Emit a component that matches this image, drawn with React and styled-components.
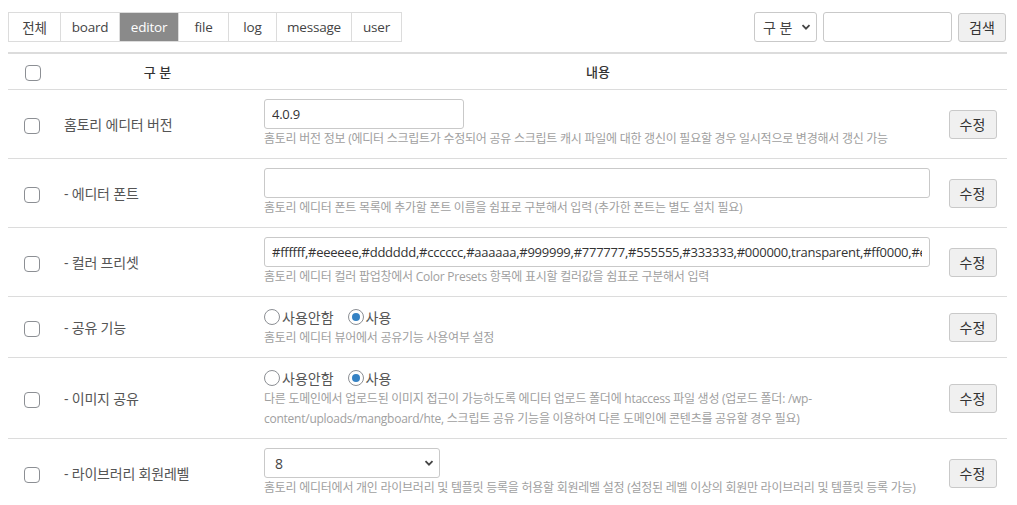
import React from "react";
import styled, { createGlobalStyle } from "styled-components";

const GlobalStyle = createGlobalStyle`
  body {
    margin: 0;
    background: #fff;
    font-family: "Open Sans", "Noto Sans CJK KR", sans-serif;
    color: #555;
  }
`;

const tabs = [
  { name: "전체", width: 51 },
  { name: "board", width: 59 },
  { name: "editor", width: 59 },
  { name: "file", width: 50 },
  { name: "log", width: 48 },
  { name: "message", width: 75 },
  { name: "user", width: 50 },
];

const rows = [
  {
    label: "홈토리 에디터 버전",
    type: "text",
    value: "4.0.9",
    width: "200px",
    desc: "홈토리 버전 정보 (에디터 스크립트가 수정되어 공유 스크립트 캐시 파일에 대한 갱신이 필요할 경우 일시적으로 변경해서 갱신 가능",
  },
  {
    label: "- 에디터 폰트",
    type: "text",
    value: "",
    width: "100%",
    desc: "홈토리 에디터 폰트 목록에 추가할 폰트 이름을 쉼표로 구분해서 입력 (추가한 폰트는 별도 설치 필요)",
  },
  {
    label: "- 컬러 프리셋",
    type: "text",
    value:
      "#ffffff,#eeeeee,#dddddd,#cccccc,#aaaaaa,#999999,#777777,#555555,#333333,#000000,transparent,#ff0000,#e91e63,#9c27b0",
    width: "100%",
    desc: "홈토리 에디터 컬러 팝업창에서 Color Presets 항목에 표시할 컬러값을 쉼표로 구분해서 입력",
  },
  {
    label: "- 공유 기능",
    type: "radio",
    desc: "홈토리 에디터 뷰어에서 공유기능 사용여부 설정",
  },
  {
    label: "- 이미지 공유",
    type: "radio",
    desc: "다른 도메인에서 업로드된 이미지 접근이 가능하도록 에디터 업로드 폴더에 htaccess 파일 생성 (업로드 폴더: /wp-content/uploads/mangboard/hte, 스크립트 공유 기능을 이용하여 다른 도메인에 콘텐츠를 공유할 경우 필요)",
  },
  {
    label: "- 라이브러리 회원레벨",
    type: "select",
    value: "8",
    desc: "홈토리 에디터에서 개인 라이브러리 및 템플릿 등록을 허용할 회원레벨 설정 (설정된 레벨 이상의 회원만 라이브러리 및 템플릿 등록 가능)",
  },
];

function Chevron() {
  return (
    <svg width="10" height="10" viewBox="0 0 10 10">
      <path d="M1.5 3.2 L5 6.7 L8.5 3.2" fill="none" stroke="#444" strokeWidth="1.8" />
    </svg>
  );
}

function App() {
  return (
    <Page>
      <GlobalStyle />
      <Toolbar>
        <TabList>
          {tabs.map((t) => (
            <Tab key={t.name} $width={t.width} $active={t.name === "editor"}>
              {t.name}
            </Tab>
          ))}
        </TabList>
        <Search>
          <SelectWrap $width="63px">
            <SelectBox>
              <option>구 분</option>
            </SelectBox>
            <Arrow>
              <Chevron />
            </Arrow>
          </SelectWrap>
          <SearchInput />
          <Button>검색</Button>
        </Search>
      </Toolbar>

      <Table>
        <colgroup>
          <col style={{ width: 49 }} />
          <col style={{ width: 201 }} />
          <col />
          <col style={{ width: 69 }} />
        </colgroup>
        <thead>
          <tr>
            <Th>
              <Check />
            </Th>
            <Th>구 분</Th>
            <Th>내용</Th>
            <Th />
          </tr>
        </thead>
        <tbody>
          {rows.map((r) => (
            <tr key={r.label}>
              <CheckCell>
                <Check />
              </CheckCell>
              <LabelCell>{r.label}</LabelCell>
              <ContentCell>
                {r.type === "text" && (
                  <TextInput $width={r.width} defaultValue={r.value} />
                )}
                {r.type === "radio" && (
                  <RadioGroup>
                    <RadioOption>
                      <Radio />
                      사용안함
                    </RadioOption>
                    <RadioOption>
                      <Radio $checked />
                      사용
                    </RadioOption>
                  </RadioGroup>
                )}
                {r.type === "select" && (
                  <SelectWrap $width="176px">
                    <SelectBox $pad="10px">
                      <option>{r.value}</option>
                    </SelectBox>
                    <Arrow>
                      <Chevron />
                    </Arrow>
                  </SelectWrap>
                )}
                <Desc>{r.desc}</Desc>
              </ContentCell>
              <ButtonCell>
                <Button>수정</Button>
              </ButtonCell>
            </tr>
          ))}
        </tbody>
      </Table>
    </Page>
  );
}

export default App;

const Page = styled.div`
  padding: 12px 10px 0 8px;
  width: 999px;
`;

const Toolbar = styled.div`
  display: flex;
  justify-content: space-between;
  align-items: center;
  height: 30px;
  margin-bottom: 10px;
`;

const TabList = styled.div`
  display: flex;
  border: 1px solid #dcdcdc;
  height: 30px;
  box-sizing: border-box;
`;

const Tab = styled.div`
  display: flex;
  align-items: center;
  justify-content: center;
  box-sizing: border-box;
  width: ${(p) => p.$width}px;
  font-size: 13.5px;
  letter-spacing: -0.2px;
  color: ${(p) => (p.$active ? "#fff" : "#444")};
  background: ${(p) => (p.$active ? "#8a8a8a" : "#fff")};
  border-left: 1px solid #dcdcdc;
  &:first-child {
    border-left: none;
  }
`;

const Search = styled.div`
  display: flex;
  gap: 6px;
  align-items: center;
  padding-right: 1px;
`;

const SelectWrap = styled.div`
  position: relative;
  width: ${(p) => p.$width};
  height: 30px;
`;

const SelectBox = styled.select`
  appearance: none;
  width: 100%;
  height: 30px;
  border: 1px solid #c9c9c9;
  border-radius: 3px;
  background: #fff;
  padding: 0 0 0 ${(p) => p.$pad || "8px"};
  font-family: "Open Sans", "Noto Sans CJK KR", sans-serif;
  font-size: 14px;
  color: #444;
`;

const Arrow = styled.span`
  position: absolute;
  right: 6px;
  top: 10px;
  pointer-events: none;
  line-height: 0;
`;

const SearchInput = styled.input`
  width: 129px;
  height: 30px;
  box-sizing: border-box;
  border: 1px solid #c9c9c9;
  border-radius: 3px;
`;

const Button = styled.button`
  width: 48px;
  height: 29px;
  padding: 0;
  border: 1px solid #c9c9c9;
  border-radius: 3px;
  background: #f0f0f0;
  font-family: "Open Sans", "Noto Sans CJK KR", sans-serif;
  font-size: 14px;
  color: #333;
  cursor: pointer;
`;

const Table = styled.table`
  width: 999px;
  table-layout: fixed;
  border-collapse: collapse;
  border-top: 2px solid #dcdcdc;
`;

const Th = styled.th`
  height: 35px;
  font-weight: 500;
  font-size: 13px;
  color: #333;
  text-align: center;
  border-bottom: 1px solid #dcdcdc;
  vertical-align: middle;
  padding: 0;
`;

const Cell = styled.td`
  border-bottom: 1px solid #dcdcdc;
  vertical-align: middle;
  padding: 9px 0;
`;

const CheckCell = styled(Cell)`
  text-align: center;
  padding-right: 1px;
`;

const LabelCell = styled(Cell)`
  padding-left: 7px;
  font-size: 14px;
  letter-spacing: -0.2px;
  color: #555;
`;

const ContentCell = styled(Cell)`
  padding-left: 6px;
  padding-right: 8px;
`;

const ButtonCell = styled(Cell)`
  text-align: center;
`;

const Check = styled.span`
  display: inline-block;
  width: 16px;
  height: 16px;
  box-sizing: border-box;
  border: 1px solid #8c8f94;
  border-radius: 4px;
  vertical-align: middle;
`;

const TextInput = styled.input`
  display: block;
  width: ${(p) => p.$width};
  height: 30px;
  box-sizing: border-box;
  padding: 0 7px;
  border: 1px solid #c9c9c9;
  border-radius: 3px;
  font-family: "Open Sans", "Noto Sans CJK KR", sans-serif;
  font-size: 13px;
  letter-spacing: -0.25px;
  color: #333;
`;

const Desc = styled.div`
  font-size: 12px;
  line-height: 20px;
  letter-spacing: -0.25px;
  color: #a0a0a0;
`;

const RadioGroup = styled.div`
  display: flex;
  gap: 14px;
  height: 22px;
  align-items: center;
`;

const RadioOption = styled.label`
  display: flex;
  align-items: center;
  gap: 2px;
  font-size: 14px;
  color: #555;
`;

const Radio = styled.span`
  position: relative;
  width: 16px;
  height: 16px;
  box-sizing: border-box;
  border: 1px solid #8c8f94;
  border-radius: 50%;
  &::after {
    content: "";
    display: ${(p) => (p.$checked ? "block" : "none")};
    position: absolute;
    left: 3px;
    top: 3px;
    width: 8px;
    height: 8px;
    border-radius: 50%;
    background: #3582c4;
  }
`;
